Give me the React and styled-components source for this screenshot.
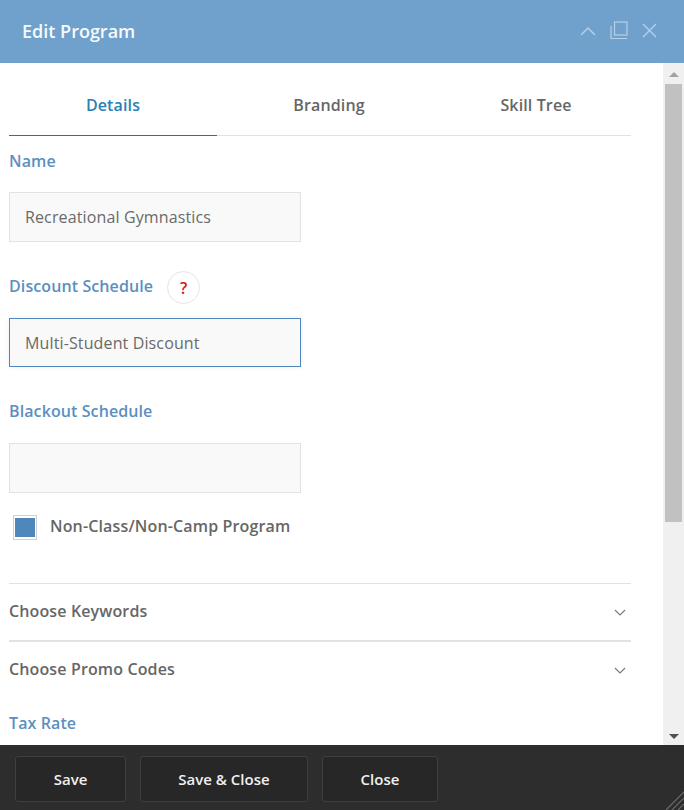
import styled, { createGlobalStyle } from "styled-components";

const GlobalStyle = createGlobalStyle`
  html, body {
    margin: 0;
    padding: 0;
    background: #ffffff;
    font-family: "Open Sans", "Liberation Sans", sans-serif;
  }
  * {
    box-sizing: border-box;
  }
`;

const App = () => {
  return (
    <Window>
      <GlobalStyle />
      <Header>
        <Title>Edit Program</Title>
        <HeaderIcons>
          <svg width="16" height="10" viewBox="0 0 16 10" fill="none" stroke="#b4d0e8" strokeWidth="1.5">
            <path d="M1 9 L8 2 L15 9" />
          </svg>
          <svg width="18" height="19" viewBox="0 0 18 19" fill="none" stroke="#b4d0e8" strokeWidth="1.2">
            <rect x="4.5" y="1" width="12.5" height="13" />
            <path d="M1 5 V17.5 H17" />
          </svg>
          <svg width="15" height="15" viewBox="0 0 15 15" fill="none" stroke="#b4d0e8" strokeWidth="1.4">
            <path d="M1 1 L14 14 M14 1 L1 14" />
          </svg>
        </HeaderIcons>
      </Header>

      <Body>
        <Content>
          <Tabs>
            <Tab $active $width="208px">Details</Tab>
            <Tab $width="224px">Branding</Tab>
            <Tab $width="190px">Skill Tree</Tab>
          </Tabs>

          <NameLabel>Name</NameLabel>
          <Field>Recreational Gymnastics</Field>

          <LabelRow>
            <RowLabel>Discount Schedule</RowLabel>
            <HelpButton>?</HelpButton>
          </LabelRow>
          <Field $focused>Multi-Student Discount</Field>

          <BlackoutLabel>Blackout Schedule</BlackoutLabel>
          <Field />

          <CheckRow>
            <CheckBox>
              <CheckFill />
            </CheckBox>
            <CheckText>Non-Class/Non-Camp Program</CheckText>
          </CheckRow>

          <Accordion $first>
            <AccordionText>Choose Keywords</AccordionText>
            <Chevron />
          </Accordion>
          <Accordion $thick>
            <AccordionText>Choose Promo Codes</AccordionText>
            <Chevron />
          </Accordion>
          <TaxLabel>Tax Rate</TaxLabel>
        </Content>

        <Scrollbar>
          <ArrowUp />
          <Thumb />
          <ArrowDown />
        </Scrollbar>
      </Body>

      <Footer>
        <FooterButton $width="111px">Save</FooterButton>
        <FooterButton $width="168px">Save &amp; Close</FooterButton>
        <FooterButton $width="116px">Close</FooterButton>
        <Grip width="20" height="20" viewBox="0 0 20 20" stroke="#6a6a6a" strokeWidth="1.2">
          <path d="M2 20 L20 2 M8 20 L20 8 M14 20 L20 14" />
        </Grip>
      </Footer>
    </Window>
  );
};

const Chevron = () => (
  <svg width="12" height="7" viewBox="0 0 12 7" fill="none" stroke="#777777" strokeWidth="1.1">
    <path d="M1 1 L6 6 L11 1" />
  </svg>
);

const Window = styled.div`
  position: relative;
  width: 684px;
  height: 810px;
  display: flex;
  flex-direction: column;
  overflow: hidden;
`;

const Header = styled.div`
  height: 63px;
  flex-shrink: 0;
  background-color: #6fa1cc;
  display: flex;
  align-items: center;
  justify-content: space-between;
  padding: 0 27px 2px 22px;
`;

const Title = styled.div`
  font-size: 18px;
  font-weight: 600;
  color: #f6f9fc;
`;

const HeaderIcons = styled.div`
  display: flex;
  align-items: center;
  gap: 14px;
`;

const Body = styled.div`
  flex: 1;
  min-height: 0;
  display: flex;
`;

const Content = styled.div`
  flex: 1;
  min-width: 0;
  padding: 0 32px 0 9px;
  overflow: hidden;
`;

const Tabs = styled.div`
  height: 73px;
  display: flex;
  border-bottom: 1px solid #e2e2e2;
`;

const Tab = styled.div`
  width: ${(props) => props.$width};
  height: 73px;
  display: flex;
  align-items: center;
  justify-content: center;
  padding-top: 11px;
  font-size: 16px;
  font-weight: 600;
  letter-spacing: 0.13px;
  color: ${(props) => (props.$active ? "#2a7fb6" : "#666666")};
  border-bottom: ${(props) => (props.$active ? "1px solid #1a76b0" : "none")};
`;

const Label = styled.div`
  font-size: 16px;
  font-weight: 600;
  line-height: 22px;
  letter-spacing: 0.1px;
  color: #5b8fc0;
`;

const NameLabel = styled(Label)`
  margin-top: 14px;
  margin-bottom: 20px;
`;

const LabelRow = styled.div`
  display: flex;
  align-items: center;
  gap: 14px;
  margin-top: 29px;
  margin-bottom: 14px;
`;

const RowLabel = styled(Label)`
  margin-bottom: 3px;
`;

const BlackoutLabel = styled(Label)`
  margin-top: 33px;
  margin-bottom: 21px;
`;

const TaxLabel = styled(Label)`
  margin-top: 14px;
`;

const HelpButton = styled.div`
  width: 33px;
  height: 33px;
  border: 1px solid #e4e4e4;
  border-radius: 50%;
  display: flex;
  align-items: center;
  justify-content: center;
  font-size: 16px;
  font-weight: 600;
  color: #d8111c;
`;

const Field = styled.div`
  width: 292px;
  height: ${(props) => (props.$focused ? "49px" : "50px")};
  padding-left: 15px;
  display: flex;
  align-items: center;
  font-size: 16px;
  letter-spacing: 0.13px;
  color: #6a6a6a;
  background-color: #f9f9f9;
  border: 1px solid ${(props) => (props.$focused ? "#4f86bb" : "#e2e2e2")};
  box-shadow: ${(props) => (props.$focused ? "0 0 6px rgba(0, 0, 0, 0.06)" : "none")};
`;

const CheckRow = styled.div`
  display: flex;
  align-items: center;
  gap: 13px;
  margin-top: 22px;
  margin-left: 4px;
`;

const CheckBox = styled.div`
  width: 24px;
  height: 25px;
  padding: 2px 1px;
  border: 1px solid #d0d0d0;
  background-color: #ffffff;
`;

const CheckFill = styled.div`
  width: 100%;
  height: 100%;
  background-color: #4f86bb;
`;

const CheckText = styled.div`
  font-size: 16px;
  font-weight: 600;
  letter-spacing: 0.15px;
  color: #666666;
  margin-bottom: 3px;
`;

const Accordion = styled.div`
  height: ${(props) => (props.$thick ? "58px" : "57px")};
  margin-top: ${(props) => (props.$first ? "43px" : "0")};
  display: flex;
  align-items: center;
  justify-content: space-between;
  padding-right: 5px;
  border-top: ${(props) => (props.$thick ? "2px" : "1px")} solid #e2e2e2;
  &:last-of-type {
    border-bottom: 1px solid #e2e2e2;
  }
`;

const AccordionText = styled.span`
  font-size: 16px;
  font-weight: 600;
  letter-spacing: 0.13px;
  color: #666666;
  margin-bottom: 2px;
`;

const Scrollbar = styled.div`
  width: 21px;
  flex-shrink: 0;
  background-color: #f0f0f0;
  display: flex;
  flex-direction: column;
  align-items: center;
`;

const ArrowUp = styled.div`
  margin-top: 9px;
  border-left: 5px solid transparent;
  border-right: 5px solid transparent;
  border-bottom: 5px solid #a3a3a3;
`;

const Thumb = styled.div`
  width: 17px;
  height: 438px;
  margin-top: 7px;
  background-color: #c1c1c1;
`;

const ArrowDown = styled.div`
  margin-top: auto;
  margin-bottom: 6px;
  border-left: 5px solid transparent;
  border-right: 5px solid transparent;
  border-top: 5px solid #505050;
`;

const Footer = styled.div`
  height: 65px;
  flex-shrink: 0;
  background-color: #2d2d2d;
  display: flex;
  gap: 14px;
  padding: 11px 15px 8px;
`;

const FooterButton = styled.div`
  width: ${(props) => props.$width};
  display: flex;
  align-items: center;
  justify-content: center;
  font-size: 15px;
  font-weight: 600;
  color: #f0f0f0;
  background-color: #272727;
  border: 1px solid #3f3f3f;
  border-radius: 3px;
`;

const Grip = styled.svg`
  position: absolute;
  right: 0;
  bottom: 0;
`;

export default App;
